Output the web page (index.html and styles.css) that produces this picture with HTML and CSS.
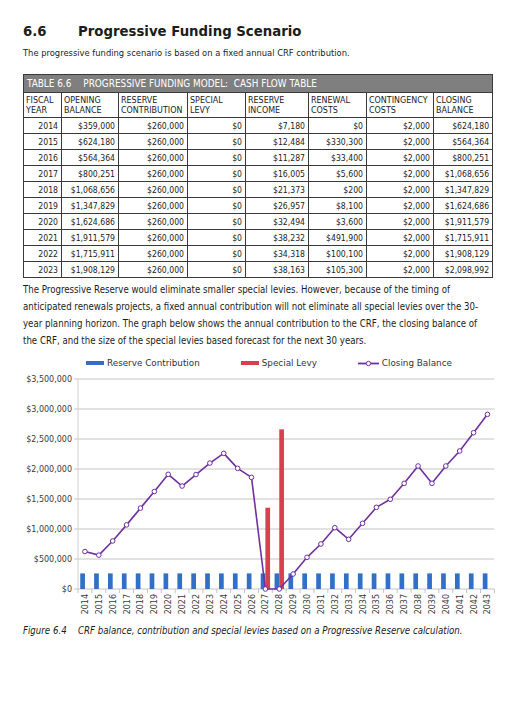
FILE: index.html
```html
<!DOCTYPE html>
<html lang="en">
<head>
    <meta charset="UTF-8">
    <meta name="viewport" content="width=device-width, initial-scale=1.0">
    <title>Progressive Funding Scenario</title>
    <link rel="stylesheet" href="styles.css">
</head>
<body>
    <div class="page">
        <h2 class="section-title"><span class="num">6.6</span>Progressive Funding Scenario</h2>
        <p class="intro">The progressive funding scenario is based on a fixed annual CRF contribution.</p>

        <table class="cash-flow">
            <colgroup>
                <col class="c-year">
                <col class="c-open">
                <col class="c-contrib">
                <col class="c-levy">
                <col class="c-income">
                <col class="c-renew">
                <col class="c-cont">
                <col class="c-close">
            </colgroup>
            <thead>
                <tr class="title-row">
                    <th colspan="8"><span class="tbl-num">TABLE 6.6</span>PROGRESSIVE FUNDING MODEL:&nbsp; CASH FLOW TABLE</th>
                </tr>
                <tr class="head-row">
                    <th>FISCAL<br>YEAR</th>
                    <th>OPENING<br>BALANCE</th>
                    <th>RESERVE<br>CONTRIBUTION</th>
                    <th>SPECIAL<br>LEVY</th>
                    <th>RESERVE<br>INCOME</th>
                    <th>RENEWAL<br>COSTS</th>
                    <th>CONTINGENCY<br>COSTS</th>
                    <th>CLOSING<br>BALANCE</th>
                </tr>
            </thead>
            <tbody>
                <tr><td>2014</td><td>$359,000</td><td>$260,000</td><td>$0</td><td>$7,180</td><td>$0</td><td>$2,000</td><td>$624,180</td></tr>
                <tr><td>2015</td><td>$624,180</td><td>$260,000</td><td>$0</td><td>$12,484</td><td>$330,300</td><td>$2,000</td><td>$564,364</td></tr>
                <tr><td>2016</td><td>$564,364</td><td>$260,000</td><td>$0</td><td>$11,287</td><td>$33,400</td><td>$2,000</td><td>$800,251</td></tr>
                <tr><td>2017</td><td>$800,251</td><td>$260,000</td><td>$0</td><td>$16,005</td><td>$5,600</td><td>$2,000</td><td>$1,068,656</td></tr>
                <tr><td>2018</td><td>$1,068,656</td><td>$260,000</td><td>$0</td><td>$21,373</td><td>$200</td><td>$2,000</td><td>$1,347,829</td></tr>
                <tr><td>2019</td><td>$1,347,829</td><td>$260,000</td><td>$0</td><td>$26,957</td><td>$8,100</td><td>$2,000</td><td>$1,624,686</td></tr>
                <tr><td>2020</td><td>$1,624,686</td><td>$260,000</td><td>$0</td><td>$32,494</td><td>$3,600</td><td>$2,000</td><td>$1,911,579</td></tr>
                <tr><td>2021</td><td>$1,911,579</td><td>$260,000</td><td>$0</td><td>$38,232</td><td>$491,900</td><td>$2,000</td><td>$1,715,911</td></tr>
                <tr><td>2022</td><td>$1,715,911</td><td>$260,000</td><td>$0</td><td>$34,318</td><td>$100,100</td><td>$2,000</td><td>$1,908,129</td></tr>
                <tr><td>2023</td><td>$1,908,129</td><td>$260,000</td><td>$0</td><td>$38,163</td><td>$105,300</td><td>$2,000</td><td>$2,098,992</td></tr>
            </tbody>
        </table>

        <p class="body-text">The Progressive Reserve would eliminate smaller special levies. However, because of the timing of<br>
            anticipated renewals projects, a fixed annual contribution will not eliminate all special levies over the 30-<br>year planning horizon. The graph below shows the annual contribution to the CRF, the closing balance of<br>
            the CRF, and the size of the special levies based forecast for the next 30 years.</p>

        <div class="chart">
            <div class="legend">
                <span class="legend-item"><span class="swatch blue"></span>Reserve Contribution</span>
                <span class="legend-item"><span class="swatch red"></span>Special Levy</span>
                <span class="legend-item">
                    <svg class="line-swatch" width="21" height="7" viewBox="0 0 21 7">
                        <line x1="0" y1="3.5" x2="21" y2="3.5" stroke="#7030a0" stroke-width="1.8"/>
                        <circle cx="10.5" cy="3.5" r="2.2" fill="#fff" stroke="#7030a0" stroke-width="1"/>
                    </svg>Closing Balance</span>
            </div>
            <svg id="crf-chart" class="plot" width="472" height="246" viewBox="0 0 472 246"></svg>
        </div>

        <p class="figure-caption"><span class="fig-num">Figure 6.4</span>CRF balance, contribution and special levies based on a Progressive Reserve calculation.</p>
    </div>

    <script src="script.js"></script>
</body>
</html>
```

FILE: styles.css
```css
body {
    margin: 0;
    background: #fff;
    color: #1c1c1c;
    font-family: "DejaVu Sans Condensed", "DejaVu Sans", sans-serif;
    font-stretch: condensed;
}

.page {
    width: 469px;
    padding: 24px 0 0 23px;
}

.section-title {
    margin: 0;
    font-family: "DejaVu Sans", sans-serif;
    font-stretch: normal;
    font-size: 13.3px;
    line-height: 16px;
    font-weight: bold;
}

.section-title .num {
    display: inline-block;
    width: 55px;
}

.intro {
    margin: 6px 0 15px;
    font-size: 9.3px;
    line-height: 13px;
}

/* Cash flow table */
.cash-flow {
    width: 469px;
    table-layout: fixed;
    border-collapse: collapse;
    border: 1px solid #3a3a3a;
}

.c-year { width: 38px; }
.c-open { width: 57px; }
.c-contrib { width: 69px; }
.c-levy { width: 58px; }
.c-income { width: 63px; }
.c-renew { width: 58px; }
.c-cont { width: 67px; }
.c-close { width: 59px; }

.cash-flow th,
.cash-flow td {
    border: 1px solid #3a3a3a;
    padding: 0 3px;
    white-space: nowrap;
    overflow: hidden;
}

.title-row th {
    height: 17px;
    background: #7f7f7f;
    color: #fff;
    font-weight: normal;
    font-size: 9.9px;
    text-align: left;
    padding-left: 3px;
}

.tbl-num {
    margin-right: 12px;
}

.head-row th {
    height: 24px;
    font-weight: normal;
    font-size: 8.9px;
    line-height: 10.5px;
    text-align: left;
    padding-left: 2px;
}

.cash-flow td {
    height: 15px;
    font-size: 8.6px;
    text-align: right;
}

.body-text {
    margin: 3px 0 0;
    font-size: 9.6px;
    line-height: 17px;
    white-space: nowrap;
}

/* Chart */
.chart {
    margin-top: 8px;
}

.legend {
    display: flex;
    gap: 41px;
    padding-left: 63px;
    height: 12px;
    align-items: center;
    font-family: "DejaVu Sans", sans-serif;
    font-stretch: normal;
    font-size: 8.8px;
    color: #333;
}

.legend-item {
    display: flex;
    align-items: center;
    gap: 3px;
}

.swatch {
    display: inline-block;
    width: 18px;
    height: 4px;
}

.swatch.blue { background: #3170c4; }
.swatch.red { background: #d6404f; }

.plot {
    display: block;
    margin-top: 3px;
    font-family: "DejaVu Sans", sans-serif;
    font-stretch: normal;
}

.plot .grid { stroke: #c4c4c4; stroke-width: 1; }
.plot .axis { stroke: #d0d0d0; stroke-width: 1; }
.plot .tick { stroke: #c4c4c4; stroke-width: 1; }
.plot .y-label { font-size: 8px; fill: #3a3a3a; text-anchor: end; }
.plot .x-label { font-size: 8px; fill: #3a3a3a; text-anchor: end; }
.plot .bar-contrib { fill: #3170c4; }
.plot .bar-levy { fill: #d6404f; }
.plot .balance { fill: none; stroke: #7030a0; stroke-width: 1.6; stroke-linejoin: round; }
.plot .marker { fill: #fff; stroke: #7030a0; stroke-width: 1; }

.figure-caption {
    margin: 6px 0 0;
    font-size: 9.6px;
    line-height: 14px;
    font-style: italic;
}

.fig-num {
    display: inline-block;
    width: 55px;
}
```

FILE: script.js
```js
// CRF chart: contribution + levy bars, closing balance line
const NS = 'http://www.w3.org/2000/svg';
const svg = document.getElementById('crf-chart');

const firstYear = 2014;
const contribution = 260000;
const levies = { 2027: 1355000, 2028: 2661000 };
const closing = [
    624180, 564364, 800251, 1068656, 1347829, 1624686, 1911579, 1715911, 1908129, 2098992,
    2261000, 2011000, 1861000, 0, 0, 250000, 528000, 750000, 1022000, 828000,
    1095000, 1361000, 1495000, 1761000, 2050000, 1761000, 2050000, 2300000, 2605000, 2911000
];

const plotLeft = 55;
const plotTop = 7;
const plotH = 210;
const catW = 13.88;
const maxVal = 3500000;
const barW = 4.7;
const plotRight = plotLeft + closing.length * catW;
const base = plotTop + plotH;

const yOf = v => plotTop + plotH - (v / maxVal) * plotH;
const money = v => '$' + String(v).replace(/\B(?=(\d{3})+(?!\d))/g, ',');

function el(name, attrs, text) {
    const node = document.createElementNS(NS, name);
    for (const k in attrs) node.setAttribute(k, attrs[k]);
    if (text !== undefined) node.textContent = text;
    svg.appendChild(node);
    return node;
}

// gridlines and y axis labels
for (let v = 0; v <= maxVal; v += 500000) {
    const y = yOf(v);
    el('line', { x1: plotLeft - 4, x2: plotRight, y1: y, y2: y, class: 'grid' });
    el('text', { x: plotLeft - 6, y: y + 3, class: 'y-label' }, money(v));
}
el('line', { x1: plotLeft, x2: plotLeft, y1: plotTop, y2: base, class: 'axis' });

// ticks between categories
for (let i = 0; i <= closing.length; i++) {
    const x = plotLeft + i * catW;
    el('line', { x1: x, x2: x, y1: base, y2: base + 4, class: 'tick' });
}

// bars
closing.forEach((_, i) => {
    const year = firstYear + i;
    const mid = plotLeft + i * catW + catW / 2;
    const hC = (contribution / maxVal) * plotH;
    el('rect', { x: mid - barW, y: base - hC, width: barW, height: hC, class: 'bar-contrib' });
    if (levies[year]) {
        const hL = (levies[year] / maxVal) * plotH;
        el('rect', { x: mid, y: base - hL, width: barW, height: hL, class: 'bar-levy' });
    }
});

// closing balance line
const pts = closing.map((v, i) => [plotLeft + i * catW + catW / 2, yOf(v)]);
el('polyline', { points: pts.map(p => p.join(',')).join(' '), class: 'balance' });
pts.forEach(([x, y]) => el('circle', { cx: x, cy: y, r: 2.3, class: 'marker' }));

// x labels (rotated)
closing.forEach((_, i) => {
    const x = plotLeft + i * catW + catW / 2 + 3;
    const y = base + 5;
    el('text', { x, y, class: 'x-label', transform: `rotate(-90 ${x} ${y})` }, String(firstYear + i));
});
```
